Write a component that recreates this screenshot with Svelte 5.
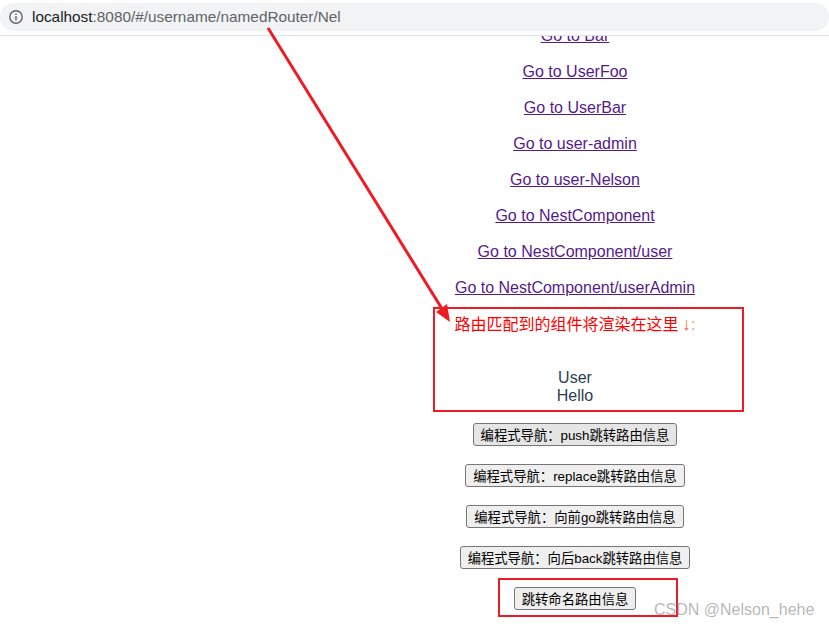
<script>
  const links = [
    "Go to Bar",
    "Go to UserFoo",
    "Go to UserBar",
    "Go to user-admin",
    "Go to user-Nelson",
    "Go to NestComponent",
    "Go to NestComponent/user",
    "Go to NestComponent/userAdmin"
  ];
  const buttons = [
    "编程式导航：push跳转路由信息",
    "编程式导航：replace跳转路由信息",
    "编程式导航：向前go跳转路由信息",
    "编程式导航：向后back跳转路由信息",
    "跳转命名路由信息"
  ];
</script>

<div class="page">
  <header class="browserBar">
    <div class="urlPill">
      <svg class="infoIcon" width="16" height="16" viewBox="0 0 16 16" fill="none">
        <circle cx="8" cy="8" r="6.2" stroke="#5f6368" stroke-width="1.4" />
        <rect x="7.3" y="7" width="1.4" height="4.4" fill="#5f6368" />
        <rect x="7.3" y="4.6" width="1.4" height="1.4" fill="#5f6368" />
      </svg>
      <span class="host">localhost</span><span class="path">:8080/#/username/namedRouter/Nel</span>
    </div>
  </header>

  <main class="content">
    {#each links as link}
      <p class="linkRow"><a href="#/">{link}</a></p>
    {/each}

    <p class="hint">路由匹配到的组件将渲染在这里 <span class="down"><span class="arrow">↓</span>:</span></p>
    <div class="routerView">
      <div>User</div>
      <div>Hello</div>
    </div>

    {#each buttons as label, i}
      <p class="buttonRow"><button class:hovered={i === 0}>{label}</button></p>
    {/each}
  </main>

  <!-- annotations drawn on top of the screenshot -->
  <svg class="annotations" width="829" height="627" viewBox="0 0 829 627" fill="none">
    <line x1="268" y1="28" x2="444" y2="312" stroke="#ed1c24" stroke-width="3" />
    <polygon points="450,322 436,312 447,304" fill="#ed1c24" />
    <rect x="434" y="308" width="309" height="103" stroke="#ed1c24" stroke-width="2" />
    <rect x="499" y="579" width="178" height="37" stroke="#ed1c24" stroke-width="2" />
  </svg>
  <div class="watermark">CSDN @Nelson_hehe</div>
</div>

<style>
  :global(body) {
    margin: 0;
    background: #fff;
  }

  .page {
    position: relative;
    width: 829px;
    height: 627px;
    overflow: hidden;
    font-family: "Liberation Sans", Arial, "Noto Sans CJK SC", sans-serif;
  }

  .browserBar {
    position: relative;
    z-index: 1;
    height: 36px;
    padding-top: 3px;
    box-sizing: border-box;
    background: #fff;
    border-bottom: 1px solid #dfe1e3;
    margin-bottom: -27px;
  }

  .urlPill {
    display: flex;
    align-items: center;
    height: 28px;
    border-radius: 14px;
    background: #f1f3f4;
    padding-left: 8px;
    font-size: 15.35px;
    white-space: nowrap;
  }

  .infoIcon {
    margin-right: 8px;
  }

  .host {
    color: #202124;
  }

  .path {
    color: #5f6368;
  }

  .content {
    margin-left: 321px;
    text-align: center;
    font-size: 16px;
    color: #2c3e50;
  }

  .linkRow {
    margin: 18px 0;
    line-height: 18px;
  }

  .linkRow a {
    color: #551a8b;
  }

  .hint {
    margin: 18px 0 0;
    line-height: 20px;
    color: #f00;
  }

  .down {
    color: #f39a5a;
  }

  .arrow {
    font-size: 18px;
    line-height: 16px;
    margin-left: -1px;
    color: #f0703c;
  }

  .routerView {
    margin-top: 34px;
    line-height: 18px;
  }

  .buttonRow {
    margin: 18px 0;
    line-height: 23px;
    height: 23px;
  }

  button {
    height: 23px;
    padding: 0 7px;
    box-sizing: border-box;
    border: 1px solid #767676;
    border-radius: 3px;
    background: #efefef;
    color: #000;
    font-family: "Liberation Sans", Arial, "Noto Sans CJK SC", sans-serif;
    font-size: 13.33px;
    vertical-align: top;
  }

  button.hovered {
    background: #e5e5e5;
  }

  .annotations {
    position: absolute;
    left: 0;
    top: 0;
    z-index: 2;
  }

  .watermark {
    position: absolute;
    z-index: 3;
    left: 654px;
    top: 601px;
    font-size: 16px;
    line-height: 18px;
    color: rgba(120, 120, 120, 0.55);
    white-space: nowrap;
  }
</style>
